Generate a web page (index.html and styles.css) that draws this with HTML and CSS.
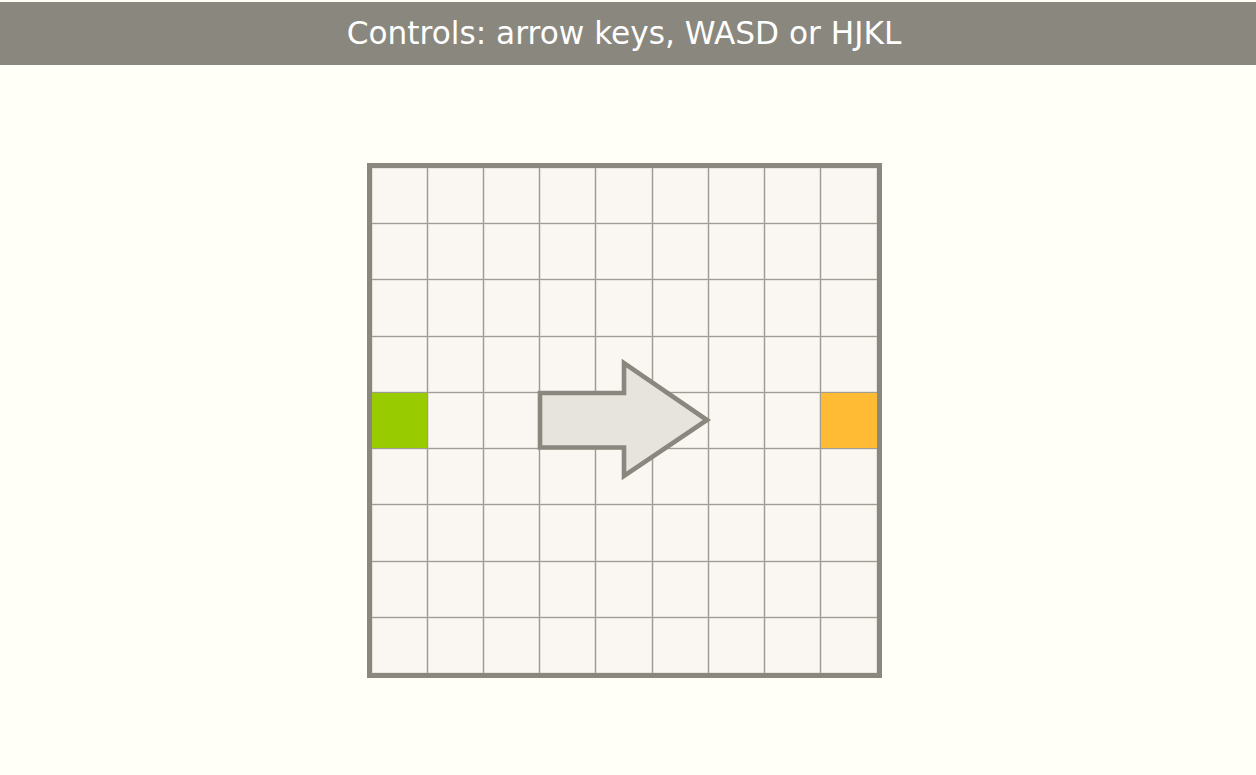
FILE: index.html
```html
<!DOCTYPE html>
<html>
<head>
<meta charset="utf-8">
<title>Maze</title>
<link rel="stylesheet" href="styles.css">
</head>
<body>
<header class="bar"><h1 class="title">Controls: arrow keys, WASD or HJKL</h1></header>
<main class="stage">
  <div class="board">
    <div class="grid">
      <div class="cell"></div><div class="cell"></div><div class="cell"></div><div class="cell"></div><div class="cell"></div><div class="cell"></div><div class="cell"></div><div class="cell"></div><div class="cell"></div>
      <div class="cell"></div><div class="cell"></div><div class="cell"></div><div class="cell"></div><div class="cell"></div><div class="cell"></div><div class="cell"></div><div class="cell"></div><div class="cell"></div>
      <div class="cell"></div><div class="cell"></div><div class="cell"></div><div class="cell"></div><div class="cell"></div><div class="cell"></div><div class="cell"></div><div class="cell"></div><div class="cell"></div>
      <div class="cell"></div><div class="cell"></div><div class="cell"></div><div class="cell"></div><div class="cell"></div><div class="cell"></div><div class="cell"></div><div class="cell"></div><div class="cell"></div>
      <div class="cell start"></div><div class="cell"></div><div class="cell"></div><div class="cell"></div><div class="cell"></div><div class="cell"></div><div class="cell"></div><div class="cell"></div><div class="cell goal"></div>
      <div class="cell"></div><div class="cell"></div><div class="cell"></div><div class="cell"></div><div class="cell"></div><div class="cell"></div><div class="cell"></div><div class="cell"></div><div class="cell"></div>
      <div class="cell"></div><div class="cell"></div><div class="cell"></div><div class="cell"></div><div class="cell"></div><div class="cell"></div><div class="cell"></div><div class="cell"></div><div class="cell"></div>
      <div class="cell"></div><div class="cell"></div><div class="cell"></div><div class="cell"></div><div class="cell"></div><div class="cell"></div><div class="cell"></div><div class="cell"></div><div class="cell"></div>
      <div class="cell"></div><div class="cell"></div><div class="cell"></div><div class="cell"></div><div class="cell"></div><div class="cell"></div><div class="cell"></div><div class="cell"></div><div class="cell"></div>
    </div>
    <svg class="arrow" width="515" height="515" viewBox="0 0 515 515">
      <polygon points="173,230 257,230 257,200 340,257 257,313 257,284.5 173,284.5" fill="#e7e3dd" stroke="#8a877e" stroke-width="4.6" stroke-linejoin="miter"/>
    </svg>
  </div>
</main>
</body>
</html>
```

FILE: styles.css
```css
html, body {
  margin: 0;
  padding: 0;
  background: #fffff8;
}
body {
  padding-top: 2px;
  font-family: "DejaVu Sans", Verdana, sans-serif;
}
.bar {
  height: 63px;
  background: #8a877e;
  display: flex;
  align-items: center;
  justify-content: center;
  padding-right: 8px;
}
.title {
  margin: 0;
  font-size: 31.2px;
  font-weight: normal;
  color: #ffffff;
  line-height: 1;
}
.stage {
  display: flex;
  justify-content: center;
  padding-top: 98px;
  padding-right: 8px;
}
.board {
  position: relative;
  border: 5px solid #8a877e;
  width: 505px;
  height: 505px;
  box-sizing: content-box;
}
.grid {
  width: 505px;
  height: 505px;
  display: grid;
  grid-template-columns: repeat(9, 1fr);
  grid-template-rows: repeat(9, 1fr);
  gap: 1.2px;
  background: #a09c94;
}
.cell {
  background: #faf6f2;
  box-shadow: inset 0 0 0 0.6px #d8d4ce;
}
.cell.start {
  background: #99cc00;
  box-shadow: none;
}
.cell.goal {
  background: #ffbb33;
  box-shadow: none;
}
.arrow {
  position: absolute;
  left: -5px;
  top: -5px;
}
```
